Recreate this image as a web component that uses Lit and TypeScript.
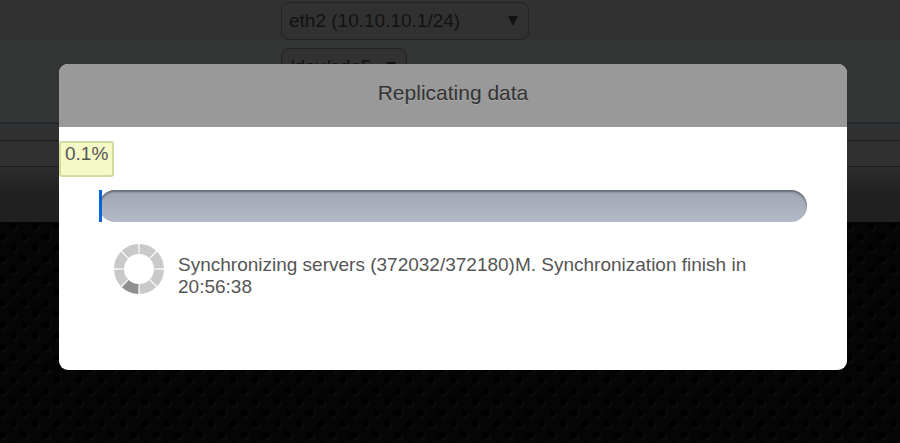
import { LitElement, html, css, svg } from "lit";
import { customElement, property } from "lit/decorators.js";

@customElement("busy-ring")
class BusyRing extends LitElement {
  static styles = css`
    :host { display: block; flex: none; width: 52px; height: 52px; }
    .ring { display: block; width: 100%; height: 100%; }
    .part { fill: none; stroke: #c9c9c9; stroke-width: 10; }
    .active { stroke: #8f8f8f; }
  `;

  render() {
    const r = 20;
    const gap = 0.03;
    const parts = Array.from({ length: 8 }, (_, i) => {
      const a = (i * Math.PI) / 4 + gap;
      const b = ((i + 1) * Math.PI) / 4 - gap;
      const d = `M${26 + r * Math.cos(a)} ${26 + r * Math.sin(a)} A${r} ${r} 0 0 1 ${26 + r * Math.cos(b)} ${26 + r * Math.sin(b)}`;
      return svg`<path class="part ${i === 2 ? "active" : ""}" d=${d} />`;
    });
    return html`<svg class="ring" viewBox="0 0 52 52" aria-hidden="true">${parts}</svg>`;
  }
}

@customElement("progress-dialog")
class ProgressDialog extends LitElement {
  @property() heading = "";
  @property() message = "";
  @property({ type: Number }) percent = 0;

  static styles = css`
    :host { display: block; }
    .dialog {
      background: #fff;
      border-radius: 9px;
      overflow: hidden;
      color: #555;
      font: 19px/22px "Liberation Sans", Arial, sans-serif;
    }
    .title {
      margin: 0;
      padding: 17px 0 22px;
      background: #999;
      color: #333;
      font-size: 21px;
      line-height: 24px;
      font-weight: normal;
      text-align: center;
      text-shadow: 0 1px 0 #aaa;
    }
    .body { padding: 14px 0 72px; }
    .badge {
      display: block;
      width: fit-content;
      box-sizing: border-box;
      height: 36px;
      padding: 0 4px;
      border: 2px solid #d5d9a2;
      border-radius: 3px;
      background: #f5f9c6;
    }
    .track {
      height: 32px;
      margin: 13px 40px 0;
      border-radius: 16px;
      background: linear-gradient(#a0a7b3, #b3bac7);
      box-shadow: inset 0 2px 2px #666c76;
    }
    .fill { height: 100%; background: #0a66d8; min-width: 3px; }
    .status { display: flex; gap: 13px; margin: 21px 80px 0 54px; }
    .text { margin: 11px 0 0; }
  `;

  render() {
    return html`
      <section class="dialog" role="dialog" aria-labelledby="title">
        <h2 class="title" id="title">${this.heading}</h2>
        <div class="body">
          <span class="badge">${this.percent}%</span>
          <div class="track" role="progressbar" aria-label="Replication" aria-valuenow=${this.percent}>
            <div class="fill" style="width:${this.percent}%"></div>
          </div>
          <div class="status">
            <busy-ring></busy-ring>
            <p class="text">${this.message}</p>
          </div>
        </div>
      </section>
    `;
  }
}

@customElement("app-root")
class AppRoot extends LitElement {
  static styles = css`
    :host {
      display: block;
      position: relative;
      min-height: 100vh;
      overflow: hidden;
      background-color: #050505;
      background-image:
        radial-gradient(circle at 11px 11px, #000 3px, transparent 4px),
        radial-gradient(circle at 11px 11px, #000 3px, transparent 4px),
        radial-gradient(circle at 13px 13px, #0b0b0b 3px, transparent 4px),
        radial-gradient(circle at 13px 13px, #0b0b0b 3px, transparent 4px);
      background-size: 22px 22px;
      background-position: -9px 6px, 2px 17px, -9px 6px, 2px 17px;
      font: 19px/22px "Liberation Sans", Arial, sans-serif;
    }
    .row { height: 40px; padding: 2px 0 0 281px; box-sizing: border-box; background: #313131; }
    .alt { height: 82px; padding-top: 8px; background: #323534; }
    .select {
      appearance: none;
      box-sizing: border-box;
      height: 38px;
      padding: 0 7px;
      border: 1px solid #222;
      border-radius: 8px;
      background-color: #313131;
      background-repeat: no-repeat;
      background-position: right 9px center;
      background-size: 12px 10px;
      background-image: url("data:image/svg+xml,%3Csvg xmlns='http://www.w3.org/2000/svg' viewBox='0 0 12 10'%3E%3Cpath d='M1 0H11L6 10Z' fill='%23111'/%3E%3C/svg%3E");
      color: #111;
      font: inherit;
      display: block;
    }
    .net { width: 248px; }
    .disk { width: 126px; }
    .band { height: 18px; border-top: 2px solid #22292e; background: #303030; box-sizing: border-box; }
    .strip { height: 27px; border: 1px solid #1d1d1d; border-width: 1px 0; box-sizing: border-box; background: #303030; }
    .foot { height: 55px; background: linear-gradient(#2d2d2d, #202020 50%, #202020); }
    .modal { position: absolute; top: 64px; left: 59px; right: 53px; }
  `;

  render() {
    return html`
      <main>
        <div class="row">
          <select class="select net" aria-label="Network interface"><option>eth2 (10.10.10.1/24)</option></select>
        </div>
        <div class="row alt">
          <select class="select disk" aria-label="Device"><option>/dev/sda5</option></select>
        </div>
        <div class="band"></div>
        <div class="strip"></div>
        <div class="foot"></div>
      </main>
      <progress-dialog
        class="modal"
        heading="Replicating data"
        message="Synchronizing servers (372032/372180)M. Synchronization finish in 20:56:38"
        percent="0.1"
      ></progress-dialog>
    `;
  }
}
